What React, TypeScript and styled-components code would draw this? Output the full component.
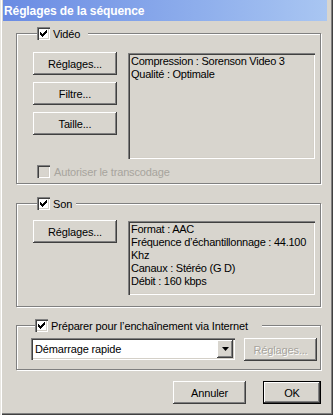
import React from "react";
import styled, { createGlobalStyle } from "styled-components";

const BG = "#d8d5ce";

const Global = createGlobalStyle`
  html, body { margin: 0; padding: 0; background: ${BG}; }
  body { font-family: "Liberation Sans", Arial, sans-serif; font-size: 11px; color: #000; }
  * { box-sizing: border-box; }
`;

const Window = styled.div`
  width: 333px;
  height: 415px;
  background: ${BG};
  padding: 0 6px 3px 3px;
  display: flex;
  flex-direction: column;
  box-shadow: inset 1px 0 0 #e8e6e1, inset 2px 0 0 #fff, inset -1px -1px 0 #404040, inset -2px -2px 0 #808080;
`;

const TitleBar = styled.div`
  height: 21px;
  flex: none;
  background: linear-gradient(90deg, #6a8be3 0%, #8eaeec 60%, #a9c6f2 100%);
  color: #fff;
  font-weight: bold;
  font-size: 12px;
  display: flex;
  align-items: center;
  padding-left: 1px;
  letter-spacing: -0.1px;
`;

const Body = styled.div`
  display: flex;
  flex-direction: column;
  padding-left: 13px;
`;

const Group = styled.fieldset<{ $mt: number; $pt: number; $pb: number; $pl?: number }>`
  margin: ${(p) => p.$mt}px 0 0 0;
  padding: ${(p) => p.$pt}px 0 ${(p) => p.$pb}px ${(p) => p.$pl ?? 16}px;
  width: 305px;
  min-width: 0;
  border: 1px solid #808080;
  box-shadow: 1px 1px 0 #fff, inset 1px 1px 0 #fff;
`;

const Legend = styled.legend<{ $w: number }>`
  margin-left: 4px;
  padding: 0;
  width: ${(p) => p.$w}px;
  height: 13px;
  display: flex;
  align-items: center;
  gap: 3px;
  background: ${BG};
  white-space: nowrap;
  letter-spacing: -0.15px;
`;

const Box = styled.span<{ $disabled?: boolean }>`
  width: 13px;
  height: 13px;
  flex: none;
  display: inline-flex;
  background: ${(p) => (p.$disabled ? BG : "#fff")};
  box-shadow: inset 1px 1px 0 #808080, inset 2px 2px 0 #404040, inset -1px -1px 0 #fff, inset -2px -2px 0 #d4d0c8;
`;

const Check: React.FC<{ checked?: boolean; disabled?: boolean }> = ({ checked, disabled }) => (
  <Box $disabled={disabled}>
    {checked && (
      <svg width="13" height="13" viewBox="0 0 13 13" shapeRendering="crispEdges">
        <path d="M3 5h1v3H3zM4 6h1v3H4zM5 7h1v3H5zM6 6h1v3H6zM7 5h1v3H7zM8 4h1v3H8zM9 3h1v3H9z" fill="#000" />
      </svg>
    )}
  </Box>
);

const Row = styled.div<{ $gap: number }>`
  display: flex;
  align-items: flex-start;
  gap: ${(p) => p.$gap}px;
`;

const ButtonColumn = styled.div`
  display: flex;
  flex-direction: column;
  gap: 7px;
  width: 84px;
`;

const Button = styled.button<{ $w?: number; $default?: boolean; $h?: number }>`
  width: ${(p) => (p.$w ? `${p.$w}px` : "100%")};
  height: ${(p) => p.$h ?? 23}px;
  padding: 0;
  margin: 0;
  font-family: inherit;
  font-size: 11px;
  letter-spacing: -0.15px;
  color: #000;
  background: ${BG};
  border: ${(p) => (p.$default ? "1px solid #000" : "none")};
  box-shadow: inset -1px -1px 0 #404040, inset 1px 1px 0 #fff, inset -2px -2px 0 #808080, inset 2px 2px 0 ${BG};
  &:disabled {
    color: #a7a49d;
    text-shadow: 1px 1px 0 #fff;
  }
`;

const InfoBox = styled.div<{ $h: number }>`
  width: 187px;
  height: ${(p) => p.$h}px;
  margin-top: 1px;
  padding: 2px 3px;
  line-height: 13px;
  letter-spacing: -0.25px;
  background: ${BG};
  box-shadow: inset 1px 1px 0 #808080, inset 2px 2px 0 #404040, inset -1px -1px 0 #fff, inset -2px -2px 0 #d4d0c8;
`;

const OptionRow = styled.div`
  margin-top: 6px;
  padding-left: 4px;
  height: 13px;
  display: flex;
  align-items: center;
  gap: 4px;
  color: #a7a49d;
  letter-spacing: -0.15px;
`;

const Select = styled.div`
  width: 204px;
  height: 22px;
  background: #fff;
  display: flex;
  align-items: center;
  padding: 2px 2px 2px 4px;
  box-shadow: inset 1px 1px 0 #808080, inset 2px 2px 0 #404040, inset -1px -1px 0 #fff, inset -2px -2px 0 #d4d0c8;
  letter-spacing: -0.15px;
`;

const SelectText = styled.span`
  flex: 1;
`;

const Arrow = styled.span`
  width: 16px;
  height: 18px;
  flex: none;
  display: flex;
  align-items: center;
  justify-content: center;
  background: ${BG};
  box-shadow: inset -1px -1px 0 #404040, inset 1px 1px 0 #fff, inset -2px -2px 0 #808080;
`;

const Footer = styled.div`
  width: 305px;
  margin-top: 11px;
  display: flex;
  justify-content: flex-end;
  gap: 17px;
`;

export default function App() {
  return (
    <>
      <Global />
      <Window>
        <TitleBar>Réglages de la séquence</TitleBar>
        <Body>
          <Group $mt={6} $pt={12} $pb={5}>
            <Legend $w={51}>
              <Check checked />
              <span>Vidéo</span>
            </Legend>
            <Row $gap={11}>
              <ButtonColumn>
                <Button>Réglages...</Button>
                <Button>Filtre...</Button>
                <Button>Taille...</Button>
              </ButtonColumn>
              <InfoBox $h={106}>
                Compression : Sorenson Video 3
                <br />
                Qualité : Optimale
              </InfoBox>
            </Row>
            <OptionRow>
              <Check disabled />
              <span>Autoriser le transcodage</span>
            </OptionRow>
          </Group>

          <Group $mt={13} $pt={10} $pb={11}>
            <Legend $w={39}>
              <Check checked />
              <span>Son</span>
            </Legend>
            <Row $gap={11}>
              <ButtonColumn>
                <Button>Réglages...</Button>
              </ButtonColumn>
              <InfoBox $h={74}>
                Format : AAC
                <br />
                Fréquence d’échantillonnage : 44.100 Khz
                <br />
                Canaux : Stéréo (G D)
                <br />
                Débit : 160 kbps
              </InfoBox>
            </Row>
          </Group>

          <Group $mt={12} $pt={6} $pb={8} $pl={14}>
            <Legend $w={227}>
              <Check checked />
              <span>Préparer pour l’enchaînement via Internet</span>
            </Legend>
            <Row $gap={9}>
              <Select>
                <SelectText>Démarrage rapide</SelectText>
                <Arrow>
                  <svg width="7" height="4" viewBox="0 0 7 4">
                    <path d="M0 0h7L3.5 4z" fill="#000" />
                  </svg>
                </Arrow>
              </Select>
              <Button $w={73} disabled>
                Réglages...
              </Button>
            </Row>
          </Group>

          <Footer>
            <Button $w={73}>Annuler</Button>
            <Button $w={58} $default>
              OK
            </Button>
          </Footer>
        </Body>
      </Window>
    </>
  );
}
